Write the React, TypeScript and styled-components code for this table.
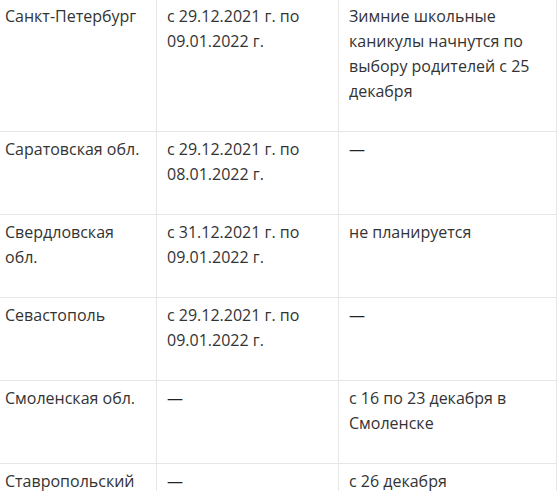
import styled, { createGlobalStyle } from 'styled-components'

const GlobalStyle = createGlobalStyle`
  html, body {
    margin: 0;
    padding: 0;
    background: #fff;
    overflow: hidden;
  }
`

const Page = styled.div`
  width: 558px;
  height: 491px;
  overflow: hidden;
`

const Table = styled.table`
  border-collapse: collapse;
  table-layout: fixed;
  width: 562px;
  margin: -2px 0 0 -6px;
  font-family: 'Open Sans', 'Noto Sans', sans-serif;
  font-size: 16px;
  line-height: 25px;
  color: #333;
`

const Cell = styled.td`
  border: 1px solid #e6e6e6;
  padding: 5px 10px 27px;
  vertical-align: top;
  text-align: left;
`

const Dash = styled.span`
  color: #222;
`

type Row = { region: string; dates: string; note: string }

const rows: Row[] = [
  {
    region: 'Санкт-Петербург',
    dates: 'с 29.12.2021 г. по 09.01.2022 г.',
    note: 'Зимние школьные каникулы начнутся по выбору родителей с 25 декабря',
  },
  {
    region: 'Саратовская обл.',
    dates: 'с 29.12.2021 г. по 08.01.2022 г.',
    note: '—',
  },
  {
    region: 'Свердловская обл.',
    dates: 'с 31.12.2021 г. по 09.01.2022 г.',
    note: 'не планируется',
  },
  {
    region: 'Севастополь',
    dates: 'с 29.12.2021 г. по 09.01.2022 г.',
    note: '—',
  },
  {
    region: 'Смоленская обл.',
    dates: '—',
    note: 'с 16 по 23 декабря в Смоленске',
  },
  {
    region: 'Ставропольский край',
    dates: '—',
    note: 'с 26 декабря',
  },
]

const renderText = (text: string) =>
  text === '—' ? <Dash>—</Dash> : text

export default function App() {
  return (
    <Page>
      <GlobalStyle />
      <Table>
        <colgroup>
          <col style={{ width: 162 }} />
          <col style={{ width: 182 }} />
          <col style={{ width: 218 }} />
        </colgroup>
        <tbody>
          {rows.map((row) => (
            <tr key={row.region}>
              <Cell>{row.region}</Cell>
              <Cell>{renderText(row.dates)}</Cell>
              <Cell>{renderText(row.note)}</Cell>
            </tr>
          ))}
        </tbody>
      </Table>
    </Page>
  )
}
